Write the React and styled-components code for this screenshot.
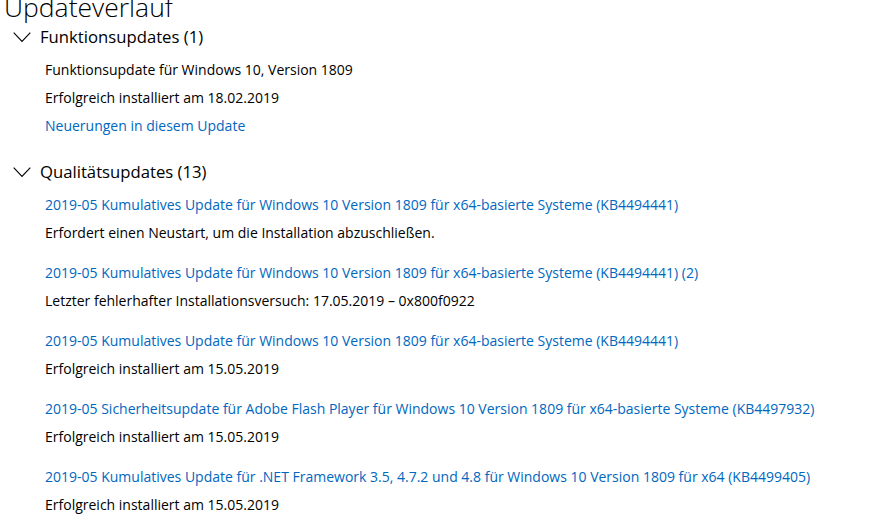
import React from 'react'
import styled, { createGlobalStyle } from 'styled-components'

const Global = createGlobalStyle`
  html, body {
    margin: 0;
    background: #fff;
  }
  body {
    font-family: "Open Sans", "Noto Sans", sans-serif;
    color: #000;
    overflow: hidden;
  }
`

const groups = [
  {
    title: 'Funktionsupdates (1)',
    items: [
      {
        lines: [
          { text: 'Funktionsupdate für Windows 10, Version 1809' },
          { text: 'Erfolgreich installiert am 18.02.2019' },
          { text: 'Neuerungen in diesem Update', link: true },
        ],
      },
    ],
  },
  {
    title: 'Qualitätsupdates (13)',
    items: [
      {
        lines: [
          { text: '2019-05 Kumulatives Update für Windows 10 Version 1809 für x64-basierte Systeme (KB4494441)', link: true },
          { text: 'Erfordert einen Neustart, um die Installation abzuschließen.' },
        ],
      },
      {
        lines: [
          { text: '2019-05 Kumulatives Update für Windows 10 Version 1809 für x64-basierte Systeme (KB4494441) (2)', link: true },
          { text: 'Letzter fehlerhafter Installationsversuch: 17.05.2019 – 0x800f0922' },
        ],
      },
      {
        lines: [
          { text: '2019-05 Kumulatives Update für Windows 10 Version 1809 für x64-basierte Systeme (KB4494441)', link: true },
          { text: 'Erfolgreich installiert am 15.05.2019' },
        ],
      },
      {
        lines: [
          { text: '2019-05 Sicherheitsupdate für Adobe Flash Player für Windows 10 Version 1809 für x64-basierte Systeme (KB4497932)', link: true },
          { text: 'Erfolgreich installiert am 15.05.2019' },
        ],
      },
      {
        lines: [
          { text: '2019-05 Kumulatives Update für .NET Framework 3.5, 4.7.2 und 4.8 für Windows 10 Version 1809 für x64 (KB4499405)', link: true },
          { text: 'Erfolgreich installiert am 15.05.2019' },
        ],
      },
    ],
  },
]

function Chevron() {
  return (
    <svg width="18" height="11" viewBox="0 0 18 11">
      <polyline points="0.7,0.7 9,9.5 17.3,0.7" fill="none" stroke="#000" strokeWidth="1.1" />
    </svg>
  )
}

function App() {
  return (
    <Page>
      <Global />
      <Title>Updateverlauf</Title>
      {groups.map((g) => (
        <Group key={g.title}>
          <GroupHeader>
            <Chevron />
            <GroupTitle>{g.title}</GroupTitle>
          </GroupHeader>
          <Items>
            {g.items.map((item, i) => (
              <Item key={i}>
                {item.lines.map((l, j) => (
                  <Line key={j} $link={l.link}>{l.text}</Line>
                ))}
              </Item>
            ))}
          </Items>
        </Group>
      ))}
    </Page>
  )
}

const Page = styled.div`
  width: 874px;
  height: 526px;
  overflow: hidden;
  display: flex;
  flex-direction: column;
`
const Title = styled.div`
  font-family: "Open Sans", sans-serif;
  font-weight: 300;
  font-size: 26.5px;
  line-height: 26px;
  margin: -6px 0 0 4px;
  height: 29px;
  flex-shrink: 0;
`
const Group = styled.div`
  display: flex;
  flex-direction: column;
  margin-bottom: 18px;
  flex-shrink: 0;
`
const GroupHeader = styled.div`
  display: flex;
  align-items: center;
  gap: 9px;
  height: 28px;
  padding-left: 13px;
  svg {
    margin-top: 1px;
  }
`
const GroupTitle = styled.div`
  font-size: 16.7px;
  line-height: 28px;
`
const Items = styled.div`
  display: flex;
  flex-direction: column;
  gap: 12px;
  padding-left: 45px;
  padding-top: 5px;
`
const Item = styled.div`
  display: flex;
  flex-direction: column;
`
const Line = styled.div`
  font-size: 14px;
  line-height: 28px;
  white-space: nowrap;
  color: ${(p) => (p.$link ? '#0067c0' : '#000')};
`

export default App
